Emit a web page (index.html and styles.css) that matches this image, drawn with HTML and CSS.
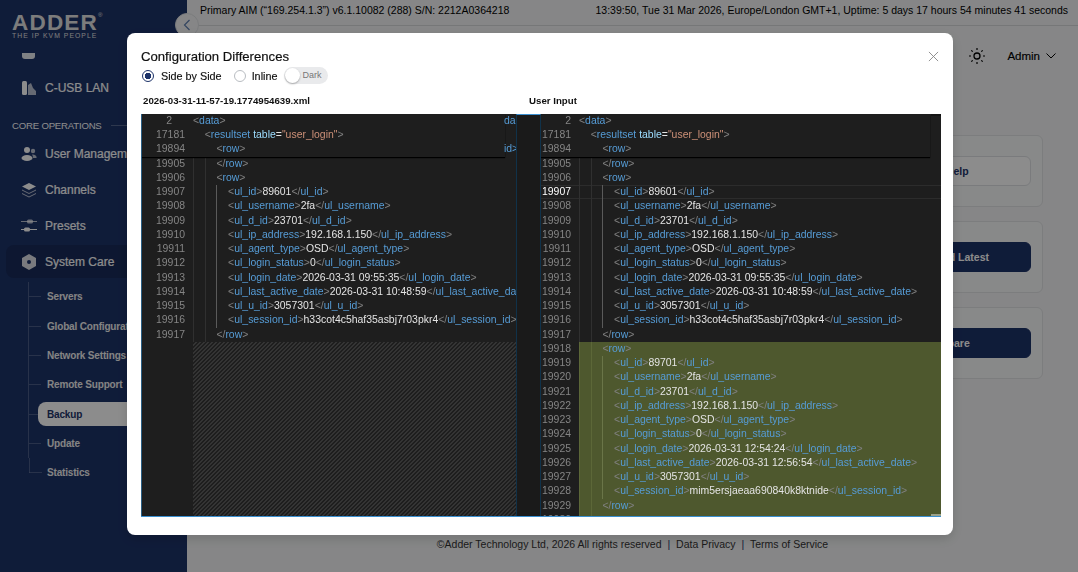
FILE: index.html
```html
<!DOCTYPE html>
<html lang="en">
<head>
<meta charset="utf-8">
<title>Configuration Differences</title>
<link rel="stylesheet" href="styles.css">
</head>
<body>
<div class="app">
  <aside class="sidebar">
    <div class="logo">
      <div class="logo-name">ADDER<sup>®</sup></div>
      <div class="logo-tag">THE IP KVM PEOPLE</div>
    </div>
    <nav class="nav">
      <div class="nav-clip"><svg width="16" height="8" viewBox="0 0 16 8"><path d="M1 0h13v3a3 3 0 0 1-3 3H4a3 3 0 0 1-3-3z" fill="#fff"/></svg></div>
      <div class="nav-item"><svg class="nav-icon" viewBox="0 0 16 16"><rect x="1" y="1" width="5" height="14" rx="1.5" fill="#fff"/><path d="M7 15V5l3-2 2 5 3 3v4z" fill="#fff" opacity=".7"/></svg>C-USB LAN</div>
      <div class="nav-heading"><span>CORE OPERATIONS</span><span class="nav-rule"></span></div>
      <div class="nav-item"><svg class="nav-icon" viewBox="0 0 16 16"><circle cx="6" cy="4" r="3" fill="#fff"/><circle cx="12" cy="5" r="2.2" fill="#fff" opacity=".7"/><ellipse cx="6" cy="12" rx="5.5" ry="3" fill="#fff"/><path d="M11 8.500c3 0 5 1.500 4.500 3.500H12c0-1.500-.500-2.500-1-3.500z" fill="#fff" opacity=".7"/></svg>User Management</div>
      <div class="nav-item"><svg class="nav-icon" viewBox="0 0 16 16"><path d="M8 1l7 3.500L8 8 1 4.500z" fill="#fff"/><path d="M1 8l7 3.500L15 8M1 11.500L8 15l7-3.500" fill="none" stroke="#fff" stroke-opacity=".7"/></svg>Channels</div>
      <div class="nav-item"><svg class="nav-icon" viewBox="0 0 16 16"><path d="M0 3.500h16" stroke="#fff" stroke-opacity=".7"/><rect x="6" y="1.500" width="6" height="4" rx="1.500" fill="#fff" opacity=".7"/><path d="M0 11.500h16" stroke="#fff"/><rect x="3" y="9.500" width="6" height="4" rx="1.500" fill="#fff"/></svg>Presets</div>
      <div class="nav-item nav-open"><svg class="nav-icon" viewBox="0 0 16 16"><path d="M8 0l7 4v8l-7 4-7-4V4z" fill="#fff" opacity=".85"/><circle cx="8" cy="8" r="2" fill="#1d3369"/></svg>System Care</div>
      <ul class="sub">
        <li>Servers</li>
        <li>Global Configuration</li>
        <li>Network Settings</li>
        <li>Remote Support</li>
        <li class="sub-active"><span class="pill">Backup</span></li>
        <li>Update</li>
        <li>Statistics</li>
      </ul>
    </nav>
  </aside>
  <main class="main">
    <header class="status">
      <span>Primary AIM (“169.254.1.3”) v6.1.10082 (288) S/N: 2212A0364218</span>
      <span>13:39:50, Tue 31 Mar 2026, Europe/London GMT+1, Uptime: 5 days 17 hours 54 minutes 41 seconds</span>
    </header>
    <div class="userbar">
      <svg class="sun" viewBox="0 0 16 16"><circle cx="8" cy="8" r="3" fill="none" stroke="#000" stroke-width="1.300"/><path d="M8 0v2M8 14v2M0 8h2M14 8h2M2.300 2.300l1.400 1.400M12.300 12.300l1.400 1.400M2.300 13.700l1.400-1.400M12.300 3.700l1.400-1.400" stroke="#000" stroke-width="1.200"/></svg>
      <span class="admin">Admin</span>
      <svg class="chev" viewBox="0 0 10 6"><path d="M.5.5L5 5 9.500.5" fill="none" stroke="#000"/></svg>
    </div>
    <section class="cards">
      <div class="card"><button class="btn btn-line">Get Help</button></div>
      <div class="card"><button class="btn">Download Latest</button></div>
      <div class="card"><button class="btn">Compare</button></div>
    </section>
    <footer class="foot">©Adder Technology Ltd, 2026 All rights reserved <b>|</b> Data Privacy <b>|</b> Terms of Service</footer>
  </main>
</div>
<button class="collapse"><svg viewBox="0 0 8 12"><path d="M6.500 1L1.500 6l5 5" fill="none" stroke="#5f7fb0" stroke-width="1.200"/></svg></button>
<div class="overlay"></div>
<div class="modal">
  <svg class="close" viewBox="0 0 12 12"><path d="M1 1l10 10M11 1L1 11" stroke="#888" stroke-width="1"/></svg>
  <div class="modal-title">Configuration Differences</div>
  <div class="options">
    <span class="radio radio-on"></span><span class="opt">Side by Side</span>
    <span class="radio"></span><span class="opt">Inline</span>
    <span class="switch"><span class="knob"></span>Dark</span>
  </div>
  <div class="names"><span class="name-left">2026-03-31-11-57-19.1774954639.xml</span><span>User Input</span></div>
  <div class="editor">
    <div class="pane pane-left">
      <div class="sticky">
        <div class="row"><span class="ln ln-short">2</span><span class="c"><i>&lt;</i><b>data</b><i>&gt;</i></span></div>
        <div class="row"><span class="ln">17181</span><span class="c i1"><i>&lt;</i><b>resultset</b> <em>table</em>=<s>"user_login"</s><i>&gt;</i></span></div>
        <div class="row"><span class="ln">19894</span><span class="c i2"><i>&lt;</i><b>row</b><i>&gt;</i></span></div>
        <span class="ghost ghost-1">da</span><span class="ghost ghost-3">id&gt;</span>
      </div>
      <div class="row"><span class="ln">19905</span><span class="c i2"><i>&lt;/</i><b>row</b><i>&gt;</i></span></div>
      <div class="row"><span class="ln">19906</span><span class="c i2"><i>&lt;</i><b>row</b><i>&gt;</i></span></div>
      <div class="row"><span class="ln">19907</span><span class="c i3"><i>&lt;</i><b>ul_id</b><i>&gt;</i>89601<i>&lt;/</i><b>ul_id</b><i>&gt;</i></span></div>
      <div class="row"><span class="ln">19908</span><span class="c i3"><i>&lt;</i><b>ul_username</b><i>&gt;</i>2fa<i>&lt;/</i><b>ul_username</b><i>&gt;</i></span></div>
      <div class="row"><span class="ln">19909</span><span class="c i3"><i>&lt;</i><b>ul_d_id</b><i>&gt;</i>23701<i>&lt;/</i><b>ul_d_id</b><i>&gt;</i></span></div>
      <div class="row"><span class="ln">19910</span><span class="c i3"><i>&lt;</i><b>ul_ip_address</b><i>&gt;</i>192.168.1.150<i>&lt;/</i><b>ul_ip_address</b><i>&gt;</i></span></div>
      <div class="row"><span class="ln">19911</span><span class="c i3"><i>&lt;</i><b>ul_agent_type</b><i>&gt;</i>OSD<i>&lt;/</i><b>ul_agent_type</b><i>&gt;</i></span></div>
      <div class="row"><span class="ln">19912</span><span class="c i3"><i>&lt;</i><b>ul_login_status</b><i>&gt;</i>0<i>&lt;/</i><b>ul_login_status</b><i>&gt;</i></span></div>
      <div class="row"><span class="ln">19913</span><span class="c i3"><i>&lt;</i><b>ul_login_date</b><i>&gt;</i>2026-03-31 09:55:35<i>&lt;/</i><b>ul_login_date</b><i>&gt;</i></span></div>
      <div class="row"><span class="ln">19914</span><span class="c i3"><i>&lt;</i><b>ul_last_active_date</b><i>&gt;</i>2026-03-31 10:48:59<i>&lt;/</i><b>ul_last_active_date</b><i>&gt;</i></span></div>
      <div class="row"><span class="ln">19915</span><span class="c i3"><i>&lt;</i><b>ul_u_id</b><i>&gt;</i>3057301<i>&lt;/</i><b>ul_u_id</b><i>&gt;</i></span></div>
      <div class="row"><span class="ln">19916</span><span class="c i3"><i>&lt;</i><b>ul_session_id</b><i>&gt;</i>h33cot4c5haf35asbj7r03pkr4<i>&lt;/</i><b>ul_session_id</b><i>&gt;</i></span></div>
      <div class="row"><span class="ln">19917</span><span class="c i2"><i>&lt;/</i><b>row</b><i>&gt;</i></span></div>
      <div class="hatch"></div>
    </div>
    <div class="gutter"></div>
    <div class="pane pane-right">
      <div class="ruler-top"></div>
      <div class="sticky">
        <div class="row"><span class="ln">2</span><span class="c"><i>&lt;</i><b>data</b><i>&gt;</i></span></div>
        <div class="row"><span class="ln">17181</span><span class="c i1"><i>&lt;</i><b>resultset</b> <em>table</em>=<s>"user_login"</s><i>&gt;</i></span></div>
        <div class="row"><span class="ln">19894</span><span class="c i2"><i>&lt;</i><b>row</b><i>&gt;</i></span></div>
      </div>
      <div class="row"><span class="ln">19905</span><span class="c i2"><i>&lt;/</i><b>row</b><i>&gt;</i></span></div>
      <div class="row"><span class="ln">19906</span><span class="c i2"><i>&lt;</i><b>row</b><i>&gt;</i></span></div>
      <div class="row row-current"><span class="ln">19907</span><span class="c i3"><i>&lt;</i><b>ul_id</b><i>&gt;</i>89601<i>&lt;/</i><b>ul_id</b><i>&gt;</i></span></div>
      <div class="row"><span class="ln">19908</span><span class="c i3"><i>&lt;</i><b>ul_username</b><i>&gt;</i>2fa<i>&lt;/</i><b>ul_username</b><i>&gt;</i></span></div>
      <div class="row"><span class="ln">19909</span><span class="c i3"><i>&lt;</i><b>ul_d_id</b><i>&gt;</i>23701<i>&lt;/</i><b>ul_d_id</b><i>&gt;</i></span></div>
      <div class="row"><span class="ln">19910</span><span class="c i3"><i>&lt;</i><b>ul_ip_address</b><i>&gt;</i>192.168.1.150<i>&lt;/</i><b>ul_ip_address</b><i>&gt;</i></span></div>
      <div class="row"><span class="ln">19911</span><span class="c i3"><i>&lt;</i><b>ul_agent_type</b><i>&gt;</i>OSD<i>&lt;/</i><b>ul_agent_type</b><i>&gt;</i></span></div>
      <div class="row"><span class="ln">19912</span><span class="c i3"><i>&lt;</i><b>ul_login_status</b><i>&gt;</i>0<i>&lt;/</i><b>ul_login_status</b><i>&gt;</i></span></div>
      <div class="row"><span class="ln">19913</span><span class="c i3"><i>&lt;</i><b>ul_login_date</b><i>&gt;</i>2026-03-31 09:55:35<i>&lt;/</i><b>ul_login_date</b><i>&gt;</i></span></div>
      <div class="row"><span class="ln">19914</span><span class="c i3"><i>&lt;</i><b>ul_last_active_date</b><i>&gt;</i>2026-03-31 10:48:59<i>&lt;/</i><b>ul_last_active_date</b><i>&gt;</i></span></div>
      <div class="row"><span class="ln">19915</span><span class="c i3"><i>&lt;</i><b>ul_u_id</b><i>&gt;</i>3057301<i>&lt;/</i><b>ul_u_id</b><i>&gt;</i></span></div>
      <div class="row"><span class="ln">19916</span><span class="c i3"><i>&lt;</i><b>ul_session_id</b><i>&gt;</i>h33cot4c5haf35asbj7r03pkr4<i>&lt;/</i><b>ul_session_id</b><i>&gt;</i></span></div>
      <div class="row"><span class="ln">19917</span><span class="c i2"><i>&lt;/</i><b>row</b><i>&gt;</i></span></div>
      <div class="row row-add"><span class="ln">19918</span><span class="c i2"><i>&lt;</i><b>row</b><i>&gt;</i></span></div>
      <div class="row row-add"><span class="ln">19919</span><span class="c i3"><i>&lt;</i><b>ul_id</b><i>&gt;</i>89701<i>&lt;/</i><b>ul_id</b><i>&gt;</i></span></div>
      <div class="row row-add"><span class="ln">19920</span><span class="c i3"><i>&lt;</i><b>ul_username</b><i>&gt;</i>2fa<i>&lt;/</i><b>ul_username</b><i>&gt;</i></span></div>
      <div class="row row-add"><span class="ln">19921</span><span class="c i3"><i>&lt;</i><b>ul_d_id</b><i>&gt;</i>23701<i>&lt;/</i><b>ul_d_id</b><i>&gt;</i></span></div>
      <div class="row row-add"><span class="ln">19922</span><span class="c i3"><i>&lt;</i><b>ul_ip_address</b><i>&gt;</i>192.168.1.150<i>&lt;/</i><b>ul_ip_address</b><i>&gt;</i></span></div>
      <div class="row row-add"><span class="ln">19923</span><span class="c i3"><i>&lt;</i><b>ul_agent_type</b><i>&gt;</i>OSD<i>&lt;/</i><b>ul_agent_type</b><i>&gt;</i></span></div>
      <div class="row row-add"><span class="ln">19924</span><span class="c i3"><i>&lt;</i><b>ul_login_status</b><i>&gt;</i>0<i>&lt;/</i><b>ul_login_status</b><i>&gt;</i></span></div>
      <div class="row row-add"><span class="ln">19925</span><span class="c i3"><i>&lt;</i><b>ul_login_date</b><i>&gt;</i>2026-03-31 12:54:24<i>&lt;/</i><b>ul_login_date</b><i>&gt;</i></span></div>
      <div class="row row-add"><span class="ln">19926</span><span class="c i3"><i>&lt;</i><b>ul_last_active_date</b><i>&gt;</i>2026-03-31 12:56:54<i>&lt;/</i><b>ul_last_active_date</b><i>&gt;</i></span></div>
      <div class="row row-add"><span class="ln">19927</span><span class="c i3"><i>&lt;</i><b>ul_u_id</b><i>&gt;</i>3057301<i>&lt;/</i><b>ul_u_id</b><i>&gt;</i></span></div>
      <div class="row row-add"><span class="ln">19928</span><span class="c i3"><i>&lt;</i><b>ul_session_id</b><i>&gt;</i>mim5ersjaeaa690840k8ktnide<i>&lt;/</i><b>ul_session_id</b><i>&gt;</i></span></div>
      <div class="row row-add"><span class="ln">19929</span><span class="c i2"><i>&lt;/</i><b>row</b><i>&gt;</i></span></div>
      <div class="row row-add"><span class="ln">19930</span><span class="c i2"></span></div>
      <div class="ruler-mark"></div>
    </div>
  </div>
</div>
</body>
</html>
```

FILE: styles.css
```css
* { box-sizing: border-box; }
html, body { margin: 0; height: 100%; }
body { width: 1078px; height: 572px; overflow: hidden; font-family: "Liberation Sans", Arial, sans-serif; color: #000; background: #f4f5f6; }

.app { display: flex; height: 572px; }

/* sidebar */
.sidebar { width: 187px; flex: none; background: #1d3369; color: #fff; display: flex; flex-direction: column; overflow: hidden; }
.logo { height: 50px; flex: none; padding: 14px 0 0 12px; }
.logo-name { font-size: 22.5px; line-height: 17px; font-weight: 700; letter-spacing: 1.2px; color: #e2e2e2; white-space: nowrap; }
.logo-name sup { font-size: 6px; font-weight: 400; vertical-align: 13px; line-height: 0; letter-spacing: 0; }
.logo-tag { font-size: 6.8px; line-height: 8px; letter-spacing: 1.05px; margin-top: 1px; color: #e2e2e2; white-space: nowrap; }
.nav { flex: 1; overflow: hidden; }
.nav-clip { height: 20px; padding: 3px 0 0 21px; overflow: hidden; opacity: .9; }
.nav-clip svg { display: block; }
.nav-item { height: 36px; display: flex; align-items: center; padding-left: 21px; font-size: 12px; white-space: nowrap; -webkit-text-stroke: .2px #fff; }
.nav-icon { width: 16px; height: 16px; margin-right: 8px; flex: none; }
.nav-heading { display: flex; align-items: center; height: 18px; margin: 10px 0 2px; padding-left: 12px; font-size: 9.6px; letter-spacing: -.2px; white-space: nowrap; }
.nav-rule { flex: 1; height: 1px; background: rgba(255,255,255,.25); margin-left: 9px; }
.nav-open { background: #182b59; margin: 1px 0 0 6px; padding-left: 15px; border-radius: 8px 0 0 8px; height: 33px; }
.sub { list-style: none; margin: 4px 0 0; padding: 0 0 0 28px; }
.sub li { height: 29.35px; display: flex; align-items: center; padding-left: 18px; font-size: 10px; font-weight: 700; letter-spacing: -.17px; white-space: nowrap; color: #f0f0f0; background: linear-gradient(rgba(255,255,255,.2), rgba(255,255,255,.2)) no-repeat 0 50% / 12px 1px; border-left: 1px solid rgba(255,255,255,.2); }
.sub li:last-child { border-left-color: transparent; background: linear-gradient(rgba(255,255,255,.2), rgba(255,255,255,.2)) no-repeat 0 50% / 13px 1px, linear-gradient(rgba(255,255,255,.2), rgba(255,255,255,.2)) no-repeat 0 0 / 1px 50%; }
.sub li.sub-active { padding-left: 9px; background-size: 9px 1px; color: #1d3369; }
.pill { flex: 1; height: 24px; display: flex; align-items: center; padding-left: 9px; background: #fff; border-radius: 8px 0 0 8px; }

/* main */
.main { flex: 1; min-width: 0; display: flex; flex-direction: column; }
.status { height: 26px; flex: none; border-bottom: 1px solid #d8d9da; padding: 3px 10px 0 13px; display: flex; justify-content: space-between; font-size: 10.5px; line-height: 14px; white-space: nowrap; color: #000; }
.userbar { height: 54px; flex: none; display: flex; align-items: center; justify-content: flex-end; padding: 6px 22px 0 0; }
.sun { width: 16px; height: 16px; margin-right: 22px; }
.admin { font-size: 11.500px; -webkit-text-stroke: .15px #000; }
.chev { width: 10px; height: 6px; margin-left: 6px; }
.cards { display: flex; flex-direction: column; gap: 14px; align-self: flex-end; width: 300px; margin: 55px 35px 0 0; }
.card { height: 72px; border: 1px solid #e2e3e5; border-radius: 6px; background: #f8f9fa; display: flex; align-items: center; justify-content: flex-end; padding-right: 11px; }
.btn { width: 168px; height: 30px; border: 1px solid #1d3369; border-radius: 6px; background: #1d3369; color: #fff; font: 700 10.500px "Liberation Sans", Arial, sans-serif; }
.btn-line { background: #fff; border-color: #dfe1e4; color: #1d3369; padding-left: 6px; }
.foot { margin-top: auto; padding-bottom: 21px; text-align: center; font-size: 10.5px; line-height: 14px; color: #333; white-space: nowrap; }
.foot b { font-weight: 400; color: #1d3369; padding: 0 3px; }

.collapse { position: absolute; left: 175px; top: 13px; width: 24px; height: 24px; border-radius: 50%; border: 1px solid #dfe1e4; background: #f4f5f6; padding: 0; display: flex; align-items: center; justify-content: center; }
.collapse svg { width: 8px; height: 12px; }

.overlay { position: fixed; inset: 0; background: rgba(0,0,0,.45); }

/* modal */
.modal { position: fixed; left: 127px; top: 33px; width: 826px; height: 502px; background: #fff; border-radius: 8px; padding: 16px 12px 18px 14px; display: flex; flex-direction: column; box-shadow: 0 4px 12px rgba(0,0,0,.15); }
.close { position: absolute; right: 14px; top: 18px; width: 11px; height: 11px; }
.modal-title { font-size: 13.150px; line-height: 16px; height: 16px; white-space: nowrap; color: #111; -webkit-text-stroke: .2px #111; }
.options { display: flex; align-items: center; height: 18px; margin-top: 2px; font-size: 10.8px; -webkit-text-stroke: .15px #111; color: #111; }
.radio { width: 12px; height: 12px; border-radius: 50%; border: 1px solid #b9bdc2; flex: none; background: #fff; margin-left: 1px; }
.radio-on { border: 1px solid #1d3369; background: radial-gradient(circle, #1d3369 0 3px, #fff 3.500px); }
.opt { margin: 0 11px 0 7px; }
.opt + .radio + .opt { margin: 0 7px 0 6px; }
.switch { width: 44px; height: 17px; border-radius: 9px; background: #e9eaec; position: relative; font-size: 9px; color: #777; -webkit-text-stroke: 0; padding-left: 18px; line-height: 17px; white-space: nowrap; }
.knob { position: absolute; left: 1px; top: 1px; width: 15px; height: 15px; border-radius: 50%; background: #fff; box-shadow: 0 1px 2px rgba(0,0,0,.3); }
.names { display: flex; height: 16px; margin-top: 8px; padding-left: 2px; font-size: 9.700px; font-weight: 700; line-height: 16px; white-space: nowrap; color: #111; }
.name-left { width: 386px; }

.editor { margin-top: 5px; height: 404px; display: flex; background: #1e1e1e; font-size: 10.45px; line-height: 14.25px; color: #e4e4e4; overflow: hidden; border-bottom: 1px solid #3a8fd0; }
.pane { position: relative; display: flex; flex-direction: column; overflow: hidden; height: 403px; }
.pane-left { width: 375px; flex: none; border-left: 1px solid #2a5f85; --ln: 51px; }
.pane-right { width: 400px; flex: none; --ln: 38px; }
.gutter { width: 25px; flex: none; background: #1a1a1a; border-left: 1px solid #10324a; border-right: 1px solid #10324a; border-top: 1px solid #3a8fd0; }
.row { height: 14.25px; flex: none; display: flex; white-space: nowrap; }
.ln { width: var(--ln); flex: none; text-align: right; padding-right: 8px; color: #858585; }
.ln-short { padding-right: 21px; }
.c { flex: 1; min-width: 0; background-repeat: no-repeat; }
.c i { font-style: normal; color: #808080; }
.c b { font-weight: 400; color: #569cd6; }
.c em { font-style: normal; color: #9cdcfe; }
.c s { text-decoration: none; color: #ce9178; }
.i1 { padding-left: 11.700px; }
.i2 { padding-left: 23.400px; background-image: linear-gradient(90deg, #303030 1px, transparent 1px), linear-gradient(90deg, #303030 1px, transparent 1px); background-size: 1px 100%, 1px 100%; background-position: 0 0, 11.700px 0; }
.i3 { padding-left: 35.100px; background-image: linear-gradient(90deg, #303030 1px, transparent 1px), linear-gradient(90deg, #303030 1px, transparent 1px), linear-gradient(90deg, #5a5a5a 1px, transparent 1px); background-size: 1px 100%, 1px 100%, 1px 100%; background-position: 0 0, 11.700px 0, 23.400px 0; }
.sticky { position: relative; z-index: 1; flex: none; background: #1e1e1e; margin-right: 11px; box-shadow: 0 1px 1px #000; }
.sticky .c { background-image: none; }
.ghost { position: absolute; color: #569cd6; right: -11px; width: 12px; overflow: hidden; }
.ghost-1 { top: 0; }
.ghost-3 { top: 28.500px; }
.row-current { box-shadow: inset 0 1px #2c2c2c, inset 0 -1px #2c2c2c; }
.row-current .ln { color: #fff; }
.row-add .c { background-color: #4e582e; }
.row-add .i3 { background-image: linear-gradient(90deg, #5c6738 1px, transparent 1px), linear-gradient(90deg, #5c6738 1px, transparent 1px), linear-gradient(90deg, #6a7548 1px, transparent 1px); }
.row-add .i2 { background-image: linear-gradient(90deg, #5c6738 1px, transparent 1px), linear-gradient(90deg, #5c6738 1px, transparent 1px); }
.hatch { flex: 1; margin-left: 51px; background: linear-gradient(-45deg, #343434 25%, #1e1e1e 25% 50%, #343434 50% 75%, #1e1e1e 75%) 0 0 / 4px 4px; }
.ruler-top { position: absolute; z-index: 2; top: 0; right: 0; width: 10px; height: 2px; background: #141414; }
.ruler-mark { position: absolute; z-index: 2; bottom: 1px; right: 0; width: 10px; height: 2px; background: #9aa088; }
```
